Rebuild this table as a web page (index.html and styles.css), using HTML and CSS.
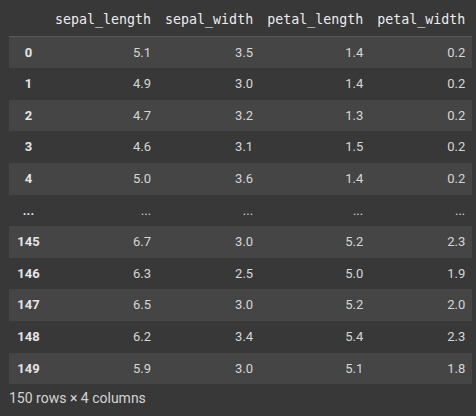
FILE: index.html
```html
<!DOCTYPE html>
<html>
<head>
<meta charset="utf-8">
<link rel="stylesheet" href="styles.css">
</head>
<body>
<div class="frame">
  <table class="df">
    <thead>
      <tr><th class="idx"></th><th>sepal_length</th><th>sepal_width</th><th>petal_length</th><th>petal_width</th></tr>
    </thead>
    <tbody>
      <tr><th>0</th><td>5.1</td><td>3.5</td><td>1.4</td><td>0.2</td></tr>
      <tr><th>1</th><td>4.9</td><td>3.0</td><td>1.4</td><td>0.2</td></tr>
      <tr><th>2</th><td>4.7</td><td>3.2</td><td>1.3</td><td>0.2</td></tr>
      <tr><th>3</th><td>4.6</td><td>3.1</td><td>1.5</td><td>0.2</td></tr>
      <tr><th>4</th><td>5.0</td><td>3.6</td><td>1.4</td><td>0.2</td></tr>
      <tr><th>...</th><td>...</td><td>...</td><td>...</td><td>...</td></tr>
      <tr><th>145</th><td>6.7</td><td>3.0</td><td>5.2</td><td>2.3</td></tr>
      <tr><th>146</th><td>6.3</td><td>2.5</td><td>5.0</td><td>1.9</td></tr>
      <tr><th>147</th><td>6.5</td><td>3.0</td><td>5.2</td><td>2.0</td></tr>
      <tr><th>148</th><td>6.2</td><td>3.4</td><td>5.4</td><td>2.3</td></tr>
      <tr><th>149</th><td>5.9</td><td>3.0</td><td>5.1</td><td>1.8</td></tr>
    </tbody>
  </table>
  <p class="shape">150 rows × 4 columns</p>
</div>
</body>
</html>
```

FILE: styles.css
```css
html, body {
  margin: 0;
  padding: 0;
  background: #383838;
}
.frame {
  padding: 4px 5px 0 9px;
  font-family: Roboto, "Liberation Sans", sans-serif;
  font-size: 13px;
  color: #d6d6d6;
}
.df {
  border-collapse: collapse;
  border-spacing: 0;
}
.df th, .df td {
  padding: 8px 7px;
  line-height: 15.6px;
  white-space: nowrap;
}
.df thead th {
  font-family: "DejaVu Sans Mono", "Liberation Mono", monospace;
  font-size: 13.3px;
  font-weight: normal;
  color: #ececf0;
  text-align: right;
  border-bottom: 1px solid #585858;
}
.df tbody th {
  text-align: center;
  font-weight: bold;
  color: #e4e4e4;
  min-width: 25px;
}
.df tbody td {
  text-align: right;
}
.df tbody tr:nth-child(odd) {
  background: #454545;
}
.shape {
  margin: 6px 0 0 0;
  font-size: 14px;
  line-height: 17px;
  color: #d4d4d4;
}
```
